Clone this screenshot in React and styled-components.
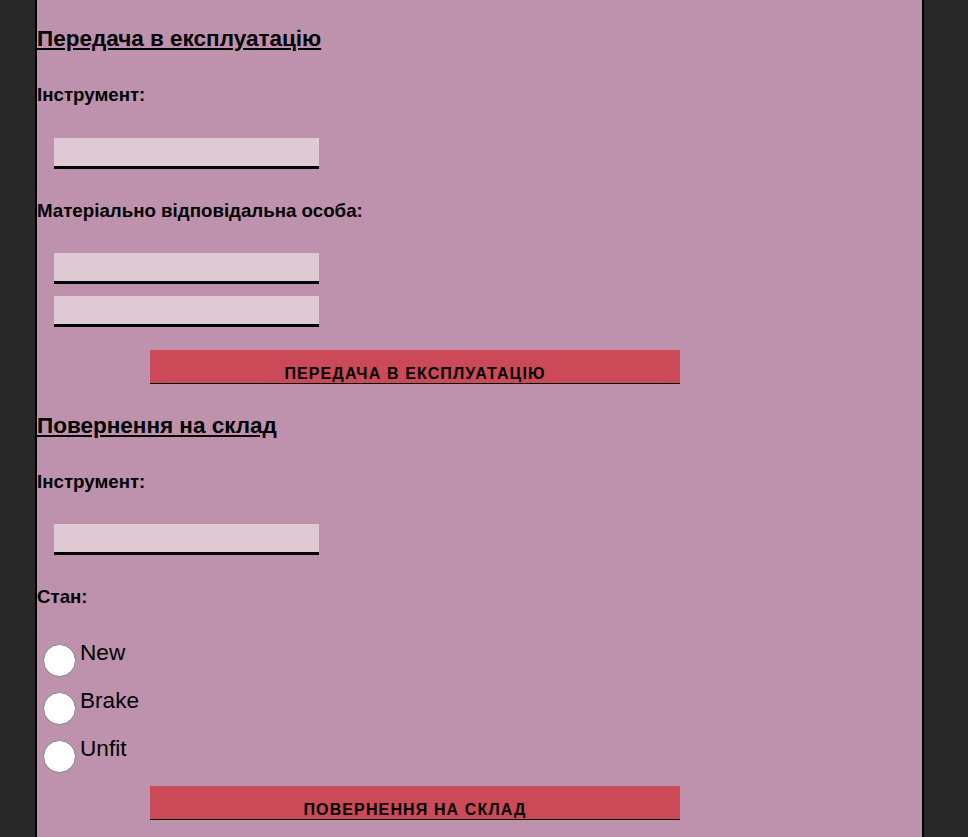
import React from "react";
import styled, { createGlobalStyle } from "styled-components";

const Global = createGlobalStyle`
  html, body { margin: 0; padding: 0; background: #282828; }
  body { font-family: "Liberation Sans", Arial, sans-serif; color: #000; }
`;

const Panel = styled.main`
  margin-left: 35px;
  width: 885px;
  min-height: 900px;
  background: #be92ad;
  border-left: 2px solid #000;
  border-right: 2px solid #000;
  padding: 25px 0 40px;
`;

const Section = styled.section`
  display: flex;
  flex-direction: column;
  align-items: flex-start;
`;

const Title = styled.h2`
  margin: ${(p) => p.$top || 0}px 0 0;
  font-size: 22.5px;
  line-height: 28px;
  font-weight: bold;
  text-decoration: underline;
`;

const Label = styled.h3`
  margin: ${(p) => p.$top}px 0 ${(p) => p.$bottom}px;
  font-size: 18.72px;
  line-height: 22px;
  font-weight: bold;
`;

const Field = styled.input`
  box-sizing: border-box;
  display: block;
  width: 265px;
  height: 31px;
  margin: ${(p) => p.$top || 0}px 0 0 17px;
  padding: 0 6px;
  border: none;
  border-bottom: 3px solid #000;
  background: #dfc9d5;
  font: 16px "Liberation Sans", Arial, sans-serif;
  outline: none;
`;

const Button = styled.button`
  box-sizing: border-box;
  display: flex;
  align-items: flex-end;
  justify-content: center;
  width: 530px;
  height: 34px;
  margin: ${(p) => p.$top}px 0 0 113px;
  padding: 0;
  border: none;
  border-bottom: 1px solid #000;
  background: #cc4a57;
  font-family: "Liberation Sans", Arial, sans-serif;
  font-size: 16px;
  font-weight: bold;
  line-height: 18px;
  letter-spacing: 1.12px;
  text-transform: uppercase;
  color: #000;
  cursor: pointer;
`;

const Options = styled.div`
  display: flex;
  flex-direction: column;
  gap: 11px;
  margin-left: 6px;
`;

const Option = styled.label`
  display: flex;
  align-items: flex-start;
  gap: 4px;
  font-size: 22.6px;
  line-height: 25px;
  cursor: pointer;
`;

const Radio = styled.input.attrs({ type: "radio" })`
  appearance: none;
  box-sizing: border-box;
  width: 33px;
  height: 33px;
  margin: 4px 0 0;
  border: 1px solid #7e7e7e;
  border-radius: 50%;
  background: #fff;
  &:checked {
    background: radial-gradient(circle, #000 0 35%, #fff 38%);
  }
`;

export default function App() {
  return (
    <>
      <Global />
      <Panel>
        <Section>
          <Title>Передача в експлуатацію</Title>
          <Label $top={31} $bottom={32}>Інструмент:</Label>
          <Field />
          <Label $top={31} $bottom={31}>Матеріально відповідальна особа:</Label>
          <Field />
          <Field $top={12} />
          <Button $top={23}>Передача в експлуатацію</Button>
        </Section>
        <Section>
          <Title $top={28}>Повернення на склад</Title>
          <Label $top={31} $bottom={31}>Інструмент:</Label>
          <Field />
          <Label $top={31} $bottom={32}>Стан:</Label>
          <Options>
            <Option><Radio name="state" value="new" />New</Option>
            <Option><Radio name="state" value="brake" />Brake</Option>
            <Option><Radio name="state" value="unfit" />Unfit</Option>
          </Options>
          <Button $top={13}>Повернення на склад</Button>
        </Section>
      </Panel>
    </>
  );
}
